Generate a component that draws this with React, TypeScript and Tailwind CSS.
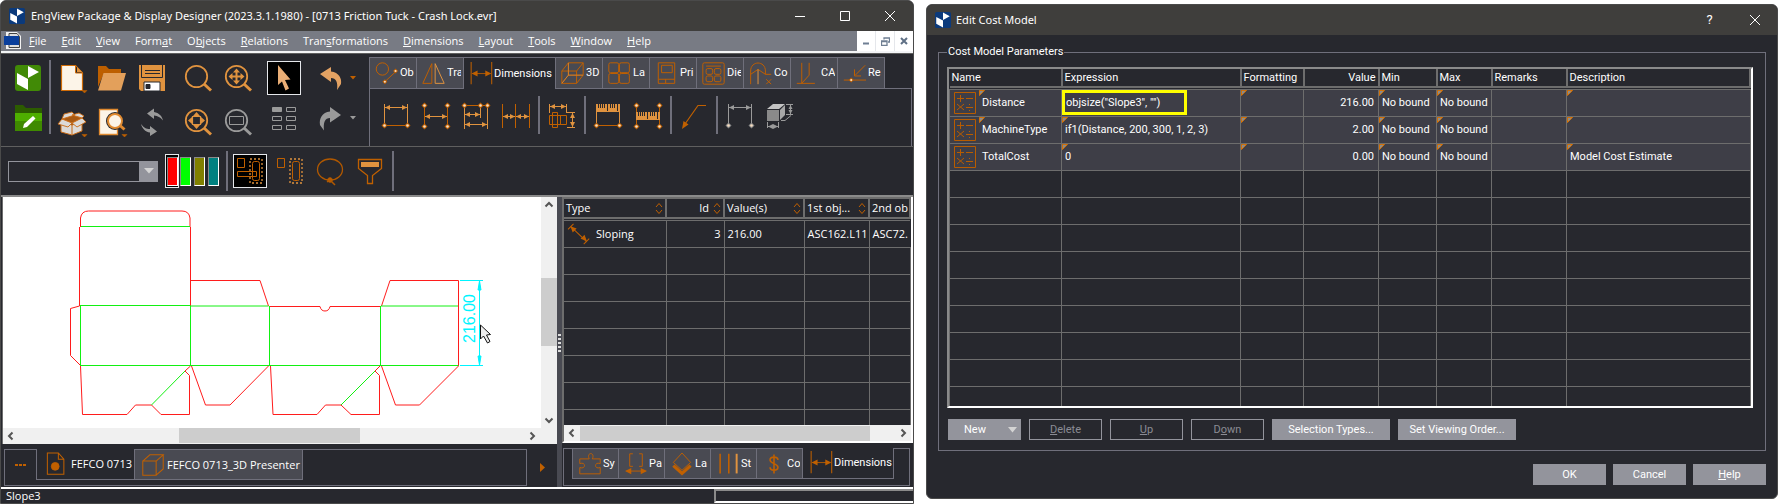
import type { ReactNode } from 'react';

const DARK = '#c06000';
const LIGHT = '#e0933f';
const GREY = '#9a9a9a';

type IconProps = { children: ReactNode; color?: string; size?: number };

const Icon = ({ children, color = DARK, size = 28 }: IconProps) => (
  <svg
    width={size}
    height={size}
    viewBox="0 0 28 28"
    fill="none"
    stroke={color}
    className="block shrink-0 overflow-visible"
    aria-hidden="true"
  >
    {children}
  </svg>
);

const Caret = ({ color = DARK }: { color?: string }) => (
  <path d="M24 26.5h5l-2.5 2.5z" fill={color} stroke={color} strokeWidth="0.5" />
);

const Logo = ({ size, color }: { size: number; color: string }) => (
  <svg width={size} height={size} viewBox="0 0 26 26" className="block shrink-0" aria-hidden="true">
    <rect width="26" height="26" rx="3" fill={color} />
    <path d="M2 8l11 6v11L2 19z" fill="#fff" />
    <path d="M13 1l11 6-11 6z" fill="#fff" />
  </svg>
);

const Node = ({ x, y, color = DARK }: { x: number; y: number; color?: string }) => (
  <>
    <path d={`M${x - 3} ${y}l3-3 3 3-3 3z`} fill={color} stroke="none" />
    <circle cx={x} cy={y} r="1.3" fill="#f6dcc0" stroke="none" />
  </>
);

const HArrow = ({ x1, x2, y, color = LIGHT }: { x1: number; x2: number; y: number; color?: string }) => (
  <>
    <path d={`M${x1} ${y}H${x2}`} stroke={color} />
    <path
      d={`M${x1} ${y}l5-2.5v5zM${x2} ${y}l-5-2.5v5z`}
      fill={color}
      stroke="none"
    />
  </>
);

const Lens = () => (
  <>
    <circle cx="12.5" cy="12.5" r="10.7" strokeWidth="1.8" />
    <path d="M20 20l7 6.5" strokeWidth="3" />
  </>
);

const DimIcon = () => (
  <Icon color={DARK} size={24}>
    <path d="M2.5 0v26M26.5 0v26" strokeWidth="1.2" />
    <path d="M4 13.5h21" />
    <path d="M3 13.5l7-3.5v7zM26 13.5l-7-3.5v7z" fill={DARK} stroke="none" />
  </Icon>
);

const NewIcon = () => (
  <Icon color="#d06c08">
    <path d="M3.5 1.5h14l7 7.5v17.5h-21z" fill="#fcf4e8" strokeWidth="1.2" />
    <path d="M17.5 1.5V9h7z" fill="#27282e" />
    <path d="M19 3v5h5z" fill={LIGHT} stroke="none" />
    <Caret />
  </Icon>
);

const OpenIcon = () => (
  <Icon>
    <path d="M0 2h8l3 3h12v4H6L0 23z" fill="#bd5f00" stroke="none" />
    <path d="M5.5 9H28l-5 17.5H0z" fill="#e3a05b" stroke="none" />
  </Icon>
);

const SaveIcon = () => (
  <Icon color="#27282e">
    <path d="M1 1h26v26H3l-2-2z" fill={LIGHT} stroke="none" />
    <path d="M3.5 1v12.5h21V1M7 6.5h15M7 9.5h15" />
    <path d="M6 18h16v9H6z" fill="#fff" />
    <path d="M8 20.5h4v4H8z" fill="#27282e" />
  </Icon>
);

const ZoomIcon = () => (
  <Icon color={LIGHT}>
    <Lens />
  </Icon>
);

const PanIcon = () => (
  <Icon color={LIGHT}>
    <Lens />
    <path d="M12.5 7v11M7 12.5h11" strokeWidth="2" />
    <path d="M12.5 4.5l3.5 4H9zM12.5 20.5l3.5-4H9zM4.5 12.5l4-3.5v7zM20.5 12.5l-4-3.5v7z" fill={LIGHT} stroke="none" />
  </Icon>
);

const FitIcon = () => (
  <Icon color={LIGHT}>
    <Lens />
    <path d="M8.5 8.5h8v8h-8z" strokeWidth="1.2" />
    <path d="M12.5 4l3.5 4H9zM12.5 21l3.5-4H9zM4 12.5l4-3.5v7zM21 12.5l-4-3.5v7z" fill={LIGHT} stroke="none" />
  </Icon>
);

const WindowZoomIcon = () => (
  <Icon color={GREY}>
    <Lens />
    <path d="M5.5 8.5h14v8h-14z" />
  </Icon>
);

const PointerIcon = () => (
  <Icon>
    <path d="M8 1l12.5 14.5-5.5.5 4 8.5-3.5 2-3.5-9-4 3.5z" fill="#eaae76" stroke="none" />
  </Icon>
);

const UndoIcon = () => (
  <Icon>
    <path d="M4 10l11-7v4.5c8 1 11 7 10 12.5l-4 6c1-8-1-12-6-12V18z" fill="#e3a263" stroke="none" />
    <path d="M34 12h6l-3 3.5z" fill={DARK} stroke="none" />
  </Icon>
);

const RedoIcon = () => (
  <Icon>
    <path d="M25 11L14 3v4.500C6 8.500 3 14.500 4 21l4 5.500c-1-8 1-12.500 6-12.500v4.500z" fill={GREY} stroke="none" />
    <path d="M34 12h6l-3 3.5z" fill={GREY} stroke="none" />
  </Icon>
);

const EditFolderIcon = () => (
  <Icon>
    <path d="M1 1h8l3 3h16v6H1z" fill="#2c5c00" stroke="none" />
    <path d="M1 9h27v18H1z" fill="#4eae00" stroke="none" />
    <path d="M1 17h27v10H1z" fill="#3f8a00" stroke="none" />
    <path d="M9 24l1-4 9-8 2.500 2.500-8.500 8.500z" fill="#fff" stroke="none" />
  </Icon>
);

const BoxIcon = () => (
  <Icon color="#c86a14">
    <path d="M3 14l11 3 10-3v9l-10 4-11-3z" fill="#dcdad8" />
    <path d="M4 11l10-4 10 3-10 5z" fill="#a85a14" />
    <path d="M4 11l-4 5 10 3 4-4zM14 15l5 4 9-5-4-4zM4 11l2-5 8-2 3 3zM14 7l7-2 5 3-2 2z" fill="#dcdad8" strokeWidth="0.9" />
    <path d="M14 16v10" />
    <Caret />
  </Icon>
);

const PreviewIcon = () => (
  <Icon color="#e08a30">
    <path d="M1.5 1.5h18v25h-18z" fill="#fcf4e8" strokeWidth="1.3" />
    <circle cx="17" cy="13" r="9" fill="#27282e" stroke="none" />
    <circle cx="17" cy="13" r="7" fill="#fcf4e8" strokeWidth="2" />
    <path d="M22 17.5l4.500 4" strokeWidth="3" />
    <Caret />
  </Icon>
);

const RefreshIcon = () => (
  <Icon color={GREY}>
    <path d="M9 5.5l7-5V4c5 1 8 4 9 8.500-3-3.500-5-4.500-9-5V11z" fill={GREY} stroke="none" />
    <path d="M19 23.500l-7 4.500v-3.500C7 24 4 20 3 16c3 4 5 5 9 5v-3z" fill={GREY} stroke="none" />
  </Icon>
);

const GridIcon = () => (
  <Icon color={GREY}>
    <path d="M2.500 3.500h9v4h-9z" fill={GREY} />
    <path d="M16.500 3.500h9v4h-9zM2.500 12.500h9v4h-9zM16.500 12.500h9v4h-9zM2.500 21.500h9v4h-9zM16.500 21.500h9v4h-9z" />
  </Icon>
);

const SelectOverlapIcon = () => (
  <Icon>
    <path d="M1.5 1.5h7v9h-7zM1.5 14.5h19v5h-19z" />
    <rect x="16.5" y="4.5" width="7" height="19" rx="2" />
    <path d="M14 2h12v24H14z" stroke={LIGHT} strokeDasharray="2 2" strokeWidth="1.3" />
  </Icon>
);

const SelectInsideIcon = () => (
  <Icon>
    <path d="M1.5 1.5h7v9h-7z" />
    <rect x="16.5" y="4.5" width="7" height="19" rx="2" />
    <path d="M14 2h12v24H14z" stroke={LIGHT} strokeDasharray="2 2" strokeWidth="1.3" />
  </Icon>
);

const LassoIcon = () => (
  <Icon color="#b05800">
    <ellipse cx="14" cy="12.5" rx="12.5" ry="10.5" strokeWidth="1.3" />
    <circle cx="14" cy="23" r="2.3" fill={DARK} />
    <path d="M11 25l3-2 5 5" strokeWidth="1.5" />
  </Icon>
);

const FilterIcon = () => (
  <Icon>
    <path d="M2.5 2.5h23v9l-9 7v8h-5v-8l-9-7z" strokeWidth="1.3" />
    <path d="M5 5h18v5H5z" fill={LIGHT} stroke="none" />
  </Icon>
);

const Ruler = ({ y }: { y: number }) => (
  <>
    <path d={`M2 ${y}h24v8H2z`} fill={LIGHT} stroke="none" />
    <path d={`M4.5 ${y}v4M6.5 ${y}v4M8.5 ${y}v4M10.5 ${y}v4M13.5 ${y}v7M16.5 ${y}v4M18.5 ${y}v4M20.5 ${y}v4M23.5 ${y}v7`} stroke="#27282e" />
  </>
);

const LinearIcon = ({ color = LIGHT, node = DARK }: { color?: string; node?: string }) => (
  <Icon color={color}>
    <path d="M2.5 2v22M25.5 2v22" />
    <HArrow x1={3} x2={25} y={5.5} color={color} />
    {color === LIGHT && <path d="M3 23.5h22" stroke={DARK} />}
    <Node x={2.5} y={23.5} color={node} />
    <Node x={25.5} y={23.5} color={node} />
  </Icon>
);

const BetweenIcon = () => (
  <Icon>
    <path d="M2.5 3v22M25.5 3v22" />
    <HArrow x1={3} x2={25} y={14.5} />
    <Node x={2.5} y={3.5} />
    <Node x={25.5} y={3.5} />
    <Node x={2.5} y={24.5} />
    <Node x={25.5} y={24.5} />
  </Icon>
);

const BaselineIcon = () => (
  <Icon>
    <path d="M2.5 3v24M25.5 3v24M18.5 3v13" stroke={LIGHT} />
    <path d="M2 3.5h24" />
    <HArrow x1={3} x2={18} y={12.5} />
    <HArrow x1={3} x2={25} y={22.5} />
    <Node x={2.5} y={3.5} />
    <Node x={18.5} y={3.5} />
    <Node x={25.5} y={3.5} />
  </Icon>
);

const ChainIcon = () => (
  <Icon>
    <path d="M0.5 2v24M13.5 2v24M27.5 2v24" />
    <HArrow x1={1} x2={13} y={14.5} />
    <HArrow x1={14} x2={27} y={14.5} />
  </Icon>
);

const AutoIcon = () => (
  <Icon>
    <path d="M1.5 13.5h17v9h-17zM4.5 10.5h5v15h-5zM12.5 13.5v9" />
    <path d="M1.5 2v9M18.5 2v9M19 10.5h8M19 25.5h8M24.5 11v14" stroke={LIGHT} />
    <HArrow x1={2} x2={18} y={4.5} />
    <path d="M24.5 11l-2.5 5h5zM24.5 25l-2.5-5h5z" fill={LIGHT} stroke="none" />
  </Icon>
);

const RulerTopIcon = () => (
  <Icon>
    <path d="M2.5 10v14M25.5 10v14" stroke={LIGHT} />
    <path d="M3 23.5h22" />
    <Ruler y={2} />
    <Node x={2.5} y={23.5} />
    <Node x={25.5} y={23.5} />
  </Icon>
);

const RulerMidIcon = () => (
  <Icon>
    <path d="M2.5 3v22M25.5 3v22" />
    <Ruler y={10} />
    <Node x={2.5} y={3.5} />
    <Node x={25.5} y={3.5} />
    <Node x={2.5} y={24.5} />
    <Node x={25.5} y={24.5} />
  </Icon>
);

const LeaderIcon = () => (
  <Icon>
    <path d="M26 3.5h-8L5 22" strokeWidth="1.2" />
    <path d="M2 27l1.5-8 5 3.5z" fill={DARK} stroke="none" />
  </Icon>
);

const SolidIcon = () => (
  <Icon color={GREY}>
    <path d="M1 8h12v11H1z" fill="#8a8a8a" stroke="none" />
    <path d="M1 7l6-5h12l-6 5z" fill="#c4c4c4" stroke="none" />
    <path d="M14 8l5-5v10l-5 5z" fill="#a8a8a8" stroke="none" />
    <path d="M1.5 20v6M12.5 20v6M20 2.5h7M20 12.5h7M24.5 3v9M15 18.5h4l6-5" />
    <HArrow x1={2} x2={12} y={24.5} color={GREY} />
    <path d="M24.5 3l-2 4h4zM24.5 12l-2-4h4z" fill={GREY} stroke="none" />
  </Icon>
);

const ribbonTabs: { label: string; icon?: ReactNode; active?: boolean }[] = [
  {
    label: 'Ob',
    icon: (
      <>
        <circle cx="9" cy="8.5" r="7.5" strokeWidth="1.2" />
        <path d="M12 24l14-13" strokeWidth="1.2" />
        <Node x={12} y={24} />
        <Node x={25} y={11} />
      </>
    ),
  },
  {
    label: 'Tra',
    icon: (
      <>
        <path d="M12 2v24H1z" strokeWidth="1.2" />
        <path d="M16 2v24h11z" stroke={LIGHT} strokeWidth="1.2" />
      </>
    ),
  },
  { label: 'Dimensions', active: true },
  {
    label: '3D',
    icon: (
      <>
        <path d="M1 11h18v15H1zM9 1h18v15H9zM1 11l8-10M19 11l8-10M19 26l8-10M1 26l8-10" strokeWidth="1.2" />
        <path d="M9 1v15h18M1 26l8-10" stroke={LIGHT} strokeWidth="0.8" />
      </>
    ),
  },
  {
    label: 'La',
    icon: (
      <>
        <rect x="1" y="1" width="12" height="12" rx="2" strokeWidth="1.2" />
        <rect x="14" y="1" width="12" height="12" rx="2" strokeWidth="1.2" />
        <rect x="1" y="14" width="12" height="12" rx="2" strokeWidth="1.2" />
        <rect x="14" y="14" width="12" height="12" rx="2" strokeWidth="1.2" />
      </>
    ),
  },
  { label: 'Pri', icon: <path d="M4 1h20v25H4zM8 4h13v9H8zM4 21h20M13 21v5" strokeWidth="1.2" /> },
  {
    label: 'Die',
    icon: (
      <>
        <rect x="1" y="1" width="26" height="26" rx="2" strokeWidth="1.2" />
        <path d="M5 5h18" strokeWidth="1.2" />
        <rect x="5" y="8" width="8" height="7" rx="2" strokeWidth="1.2" />
        <rect x="15" y="8" width="8" height="7" rx="2" strokeWidth="1.2" />
        <rect x="5" y="17" width="8" height="7" rx="2" strokeWidth="1.2" />
        <rect x="15" y="17" width="8" height="7" rx="2" strokeWidth="1.2" />
      </>
    ),
  },
  {
    label: 'Co',
    icon: (
      <>
        <path d="M2 27V11C2-2 20-2 20 11v4h7M2 15l9-6 9 6M21 21l6 6M27 21l-6 6" strokeWidth="1.2" />
        <path d="M11 9v18" stroke={LIGHT} strokeWidth="1.2" />
      </>
    ),
  },
  { label: 'CA', icon: <path d="M7 1v25M16 1v15L7 26M1 26h22" strokeWidth="1.2" /> },
  {
    label: 'Re',
    icon: (
      <>
        <path d="M1 22h27M27 4L15 16M14 9v8h8" strokeWidth="1.2" />
        <Node x={10} y={22} />
      </>
    ),
  },
];

const bottomTabs: { label: string; icon: ReactNode }[] = [
  {
    label: 'Sy',
    icon: (
      <path
        d="M1 7.5h12c-4-9 8-9 4 0h10v6c-8-3-8 8 0 5v8H1v-8c8 3 8-8 0-5z"
        strokeWidth="1.2"
      />
    ),
  },
  {
    label: 'Pa',
    icon: (
      <>
        <path d="M10 1H6v16h4M18 1h4v16h-4M2 23h24" strokeWidth="1.2" />
        <path d="M0 23l8-4v8zM28 23l-8-4v8z" fill={DARK} stroke="none" />
      </>
    ),
  },
  {
    label: 'La',
    icon: (
      <>
        <path d="M14 0l11 12-11 10L3 12z" strokeWidth="1.2" />
        <path d="M3 16l11 10 11-10" strokeWidth="4" />
      </>
    ),
  },
  {
    label: 'St',
    icon: (
      <>
        <path d="M4 1v25M15 1v25" strokeWidth="2" />
        <path d="M25 1v25" stroke={LIGHT} strokeWidth="2.5" />
      </>
    ),
  },
  {
    label: 'Co',
    icon: <path d="M14 2v24M19 9c0-5-10-5-10 0s10 4 10 9-10 5-10 0" strokeWidth="2" />,
  },
];

const menus: [string, string, string][] = [
  ['', 'F', 'ile'],
  ['', 'E', 'dit'],
  ['', 'V', 'iew'],
  ['Form', 'a', 't'],
  ['O', 'b', 'jects'],
  ['', 'R', 'elations'],
  ['Tran', 's', 'formations'],
  ['', 'D', 'imensions'],
  ['', 'L', 'ayout'],
  ['', 'T', 'ools'],
  ['', 'W', 'indow'],
  ['', 'H', 'elp'],
];

const Tool = ({ label, children, active }: { label: string; children: ReactNode; active?: boolean }) => (
  <button type="button" aria-label={label} className="flex h-10 w-10 shrink-0 items-center justify-center">
    {active ? (
      <span className="flex h-[34px] w-[34px] items-center justify-center border border-gray-200 bg-black">
        {children}
      </span>
    ) : (
      children
    )}
  </button>
);

const Divider = () => (
  <div className="flex w-[6px] shrink-0 justify-center">
    <div className="w-[2px] bg-[#6f6f7b]" />
  </div>
);

const Chevron = ({ dir }: { dir: 'up' | 'down' | 'left' | 'right' }) => {
  const d = {
    up: 'M4.5 9.5L8 6l3.5 3.5',
    down: 'M4.5 6.5L8 10l3.5-3.5',
    left: 'M9.5 4.5L6 8l3.5 3.5',
    right: 'M6.5 4.5L10 8l-3.5 3.5',
  }[dir];
  return (
    <svg width="16" height="16" viewBox="0 0 16 16" fill="none" className="block shrink-0" aria-hidden="true">
      <path d={d} stroke="#555" strokeWidth="2" />
    </svg>
  );
};

const WindowTitle = () => (
  <div className="flex h-[30px] items-center bg-[#3f3e3c] pl-2">
    <Logo size={16} color="#0b3a7c" />
    <h1 className="ml-[6px] flex-1 truncate font-['Noto_Sans',sans-serif] text-[11px] text-white">
      EngView Package &amp; Display Designer (2023.3.1.1980) - [0713 Friction Tuck - Crash Lock.evr]
    </h1>
    <div className="flex">
      <button type="button" aria-label="Minimize" className="flex w-[45px] justify-center">
        <svg width="10" height="10" stroke="#fff"><path d="M0 5.5h10" /></svg>
      </button>
      <button type="button" aria-label="Maximize" className="flex w-[45px] justify-center">
        <svg width="10" height="10" stroke="#fff" fill="none"><path d="M0.5 0.5h9v9h-9z" /></svg>
      </button>
      <button type="button" aria-label="Close" className="flex w-[46px] justify-center">
        <svg width="10" height="10" stroke="#fff"><path d="M0 0l10 10M10 0L0 10" /></svg>
      </button>
    </div>
  </div>
);

const MenuBar = () => (
  <div className="flex h-[22px] items-stretch border-b-2 border-gray-100 bg-[#787b84]">
    <svg width="18" height="18" viewBox="0 0 18 18" className="ml-[3px] mt-[1px] shrink-0" aria-hidden="true">
      <path d="M2 0h11l4 4v13H2z" fill="#f2f2f2" />
      <path d="M5 1.5h8l2.500 3v11H5z" fill="#ddd" stroke="#444" />
      <path d="M0 4h15v9H0z" fill="#0a3f9c" />
    </svg>
    <nav className="ml-[7px] flex flex-1 items-center gap-[15px] whitespace-nowrap font-['Open_Sans',sans-serif] text-[11px] leading-5 text-white">
      {menus.map(([before, key, after]) => (
        <button type="button" key={before + key + after}>
          {before}
          <u>{key}</u>
          {after}
        </button>
      ))}
    </nav>
    <div className="flex gap-[1px] bg-gray-200">
      <button type="button" aria-label="Minimize document" className="flex w-[18px] items-center justify-center bg-white">
        <svg width="8" height="8"><path d="M1 6.5h6" stroke="#6f7f93" strokeWidth="2" /></svg>
      </button>
      <button type="button" aria-label="Restore document" className="flex w-[18px] items-center justify-center bg-white">
        <svg width="9" height="9" fill="none" stroke="#6f7f93"><path d="M3 2.5V1h5.5v4H7M0.5 4h5.5v4.500H0.5zM0 4.500h6" strokeWidth="1.3" /></svg>
      </button>
      <button type="button" aria-label="Close document" className="flex w-[18px] items-center justify-center bg-white">
        <svg width="8" height="8"><path d="M1 1l6 6M7 1L1 7" stroke="#5f7085" strokeWidth="2" /></svg>
      </button>
    </div>
  </div>
);

const MainTools = () => (
  <div className="flex w-[366px] shrink-0 gap-[1px] pl-[5px] pt-1">
    <div>
      <Tool label="Home"><Logo size={26} color="#418a06" /></Tool>
      <Tool label="Edit folder"><EditFolderIcon /></Tool>
    </div>
    <div className="mt-[2px] h-[74px] w-[2px] bg-[#6f6f7b]" />
    <div className="flex gap-[6px]">
      <div className="grid grid-cols-3">
        <Tool label="New"><NewIcon /></Tool>
        <Tool label="Open"><OpenIcon /></Tool>
        <Tool label="Save"><SaveIcon /></Tool>
        <Tool label="Library"><BoxIcon /></Tool>
        <Tool label="Preview"><PreviewIcon /></Tool>
        <Tool label="Refresh"><RefreshIcon /></Tool>
      </div>
      <div className="grid grid-cols-2">
        <Tool label="Zoom"><ZoomIcon /></Tool>
        <Tool label="Pan"><PanIcon /></Tool>
        <Tool label="Zoom to fit"><FitIcon /></Tool>
        <Tool label="Zoom window"><WindowZoomIcon /></Tool>
      </div>
      <div>
        <Tool label="Select" active><PointerIcon /></Tool>
        <Tool label="Tile"><GridIcon /></Tool>
      </div>
      <div>
        <Tool label="Undo"><UndoIcon /></Tool>
        <Tool label="Redo"><RedoIcon /></Tool>
      </div>
    </div>
  </div>
);

const Ribbon = () => (
  <div className="mt-[3px] min-w-0 flex-1 pr-[1px]">
    <div className="flex h-8">
      {ribbonTabs.map((tab) =>
        tab.active ? (
          <button
            type="button"
            key={tab.label}
            className="flex w-[92px] shrink-0 items-center gap-[1px] border-l border-t border-[#6f6f7b] pl-[5px] text-white"
          >
            <DimIcon />
            {tab.label}
          </button>
        ) : (
          <button
            type="button"
            key={tab.label}
            className="flex w-[47px] shrink-0 items-center gap-[2px] border border-r-0 border-[#6f6f7b] bg-[#494a52] pl-[5px] text-white"
          >
            <Icon size={23}>{tab.icon}</Icon>
            <span className="w-[14px] overflow-hidden text-left">{tab.label}</span>
          </button>
        )
      )}
      <div className="flex-1 border-b border-l border-[#6f6f7b]" />
    </div>
    <div className="flex h-[57px] border-x border-[#6f6f7b] pl-[6px] pt-[7px]">
      <Tool label="Linear dimension"><LinearIcon /></Tool>
      <Tool label="Point dimension"><BetweenIcon /></Tool>
      <Tool label="Baseline dimension"><BaselineIcon /></Tool>
      <Tool label="Chain dimension"><ChainIcon /></Tool>
      <div className="flex h-[38px]"><Divider /></div>
      <Tool label="Auto dimension"><AutoIcon /></Tool>
      <div className="flex h-[38px]"><Divider /></div>
      <Tool label="Ruler"><RulerTopIcon /></Tool>
      <Tool label="Ruler between points"><RulerMidIcon /></Tool>
      <div className="flex h-[38px]"><Divider /></div>
      <Tool label="Leader"><LeaderIcon /></Tool>
      <div className="flex h-[38px]"><Divider /></div>
      <Tool label="Drawing size"><LinearIcon color={GREY} node="#8a8a8a" /></Tool>
      <Tool label="Solid size"><SolidIcon /></Tool>
    </div>
  </div>
);

const Swatch = ({ label, className }: { label: string; className: string }) => (
  <button
    type="button"
    aria-label={label}
    className={`h-[29px] w-[11px] border border-[#8a8a8a] border-b-white border-r-white ${className}`}
  />
);

const StyleBar = () => (
  <div className="flex h-[49px] items-center border-t border-[#5f5f5f] pl-[7px]">
    <div className="relative w-[150px]">
      <select
        aria-label="Style"
        className="block h-[21px] w-full appearance-none border border-[#93949c] bg-transparent text-white"
      />
      <span className="pointer-events-none absolute right-0 top-0 flex h-[21px] w-[19px] items-center justify-center bg-[#93949c]">
        <svg width="10" height="6"><path d="M0 0h10L5 5.5z" fill="#d4d4d4" /></svg>
      </span>
    </div>
    <div className="ml-[7px] flex items-center gap-[1px]">
      <span className="flex h-[34px] w-[14px] items-center justify-center border border-gray-200 bg-black">
        <Swatch label="Cut" className="bg-[#ff0000]" />
      </span>
      <div className="flex gap-[3px]">
        <Swatch label="Crease" className="bg-[#00ff00]" />
        <Swatch label="Perforation" className="bg-[#808000]" />
        <Swatch label="Half cut" className="bg-[#008080]" />
      </div>
    </div>
    <div className="ml-[5px] flex h-10"><Divider /></div>
    <Tool label="Select touching" active><SelectOverlapIcon /></Tool>
    <Tool label="Select inside"><SelectInsideIcon /></Tool>
    <Tool label="Lasso"><LassoIcon /></Tool>
    <Tool label="Filter"><FilterIcon /></Tool>
    <div className="flex h-10"><Divider /></div>
  </div>
);

const Drawing = () => (
  <svg width="538" height="231" viewBox="3 197 538 231" fill="none" className="block shrink-0" aria-label="Box layout">
    <g stroke="#ff1c1c">
      <path d="M80.5 227v-9q1-7 8-7H182q7 0 8 7v9M79.5 227v79M190.5 227v79" />
      <path d="M79.5 306l-9 2.5v47l10 10" />
      <path d="M190.5 280.5H260l8.5 25.5M269.5 306.5H320q1 4.500 5 4.500t5-4.500h51M381.5 306l8.500-25.500h68.500V306M458.500 306v60" />
      <path d="M80.5 366l2 48.500H127l8.500-9.500h16l9.500 9.500h28.500v-39l-4.500-4.500 5.500-5" />
      <path d="M191.5 366l14 39H230l38.500-39" />
      <path d="M270.5 366l2.500 48.500h44l8.500-9.500H341l10 9.500h28.500v-39L375 371l5-5" />
      <path d="M381.5 366l14 39h24l39-39" />
    </g>
    <g stroke="#12f012">
      <path d="M81 226.5h109M80 305.5h110.500M190.5 306h78M381 306h77M80 365.5h378.500" />
      <path d="M80.5 306v60M190.5 306v60M269.5 306v60M380.5 306v60" />
      <path d="M151.5 405l33.500-34M341 405l34-34" />
    </g>
    <g stroke="#00f4ff">
      <path d="M460 280.5h23M460 365.5h23M479.5 281v84" />
      <path d="M479.5 281l1.5 9h-3zM479.5 365l1.500-9h-3z" fill="#00f4ff" />
    </g>
    <text
      transform="translate(475 343) rotate(-90)"
      fill="#00f4ff"
      fontSize="16"
      fontFamily="'Liberation Sans', sans-serif"
    >
      216.00
    </text>
    <path d="M480.5 325v14l3-3 4 7 2.500-1.500-3.500-6.500 4-.5z" fill="#eee" stroke="#111" />
  </svg>
);

const DrawingPane = () => (
  <div className="flex min-w-0 flex-1 flex-col">
    <div className="flex border-l border-[#6d6d6d]">
      <div className="min-w-0 flex-1 overflow-hidden bg-white">
        <Drawing />
      </div>
      <div className="flex w-4 flex-col bg-[#f0f0f0]">
        <Chevron dir="up" />
        <div className="mt-[65px] h-[68px] bg-[#cdcdcd]" />
        <div className="flex-1" />
        <Chevron dir="down" />
      </div>
    </div>
    <div className="flex h-4 border-l border-[#6d6d6d] bg-[#f0f0f0] pr-[17px]">
      <Chevron dir="left" />
      <div className="ml-[160px] h-[15px] w-[181px] bg-[#cdcdcd]" />
      <div className="flex-1" />
      <Chevron dir="right" />
    </div>
    <div className="flex h-[43px] pb-[1px] pl-[2px] pt-[5px] text-white">
      <div className="flex min-w-0 flex-1 border-b border-l border-r border-[#6f6f7b]">
        <button
          type="button"
          aria-label="More sheets"
          className="flex h-[31px] w-[31px] shrink-0 items-center justify-center border-t border-[#6f6f7b]"
        >
          <svg width="12" height="4"><path d="M0 1h3v2H0zM4 1h3v2H4zM8 1h3v2H8z" fill={DARK} /></svg>
        </button>
        <button
          type="button"
          className="flex h-[31px] w-[98px] shrink-0 items-center gap-1 whitespace-nowrap border-b border-l border-[#6f6f7b] pl-2 font-['Open_Sans',sans-serif]"
        >
          <Icon size={22}>
            <path d="M3 0h14l7 8v19H3zM17 0v8h7" strokeWidth="1.3" />
            <circle cx="13" cy="17" r="5" fill={DARK} />
          </Icon>
          FEFCO 0713
        </button>
        <button
          type="button"
          className="flex h-[31px] w-[169px] shrink-0 items-center gap-[3px] whitespace-nowrap border border-[#6f6f7b] bg-[#494a52] pl-[7px] font-['Open_Sans',sans-serif]"
        >
          <Icon size={22}>
            <path d="M1 9h17v18H1zM1 9l9-8h17l-9 8M27 1v18l-9 8" strokeWidth="1.3" />
          </Icon>
          FEFCO 0713_3D Presenter
        </button>
        <div className="flex-1 border-t border-[#6f6f7b]" />
      </div>
      <button type="button" aria-label="Next sheet" className="flex w-[30px] items-center justify-center">
        <svg width="5" height="9"><path d="M0 0v9l5-4.500z" fill={DARK} /></svg>
      </button>
    </div>
  </div>
);

const SortMark = () => (
  <svg width="8" height="11" fill="none" stroke={DARK} className="shrink-0" aria-hidden="true">
    <path d="M1 4l3-3.500L7 4M1 7l3 3.500L7 7" />
  </svg>
);

const dimColumns = ['Type', 'Id', 'Value(s)', '1st obj...', '2nd ob'];

const DimensionPane = () => (
  <div className="flex w-[351px] shrink-0 flex-col">
    <div className="h-[246px] border-b-2 border-l-2 border-r-2 border-b-white border-l-[#6d6d6d] border-r-white">
      <div className="h-[228px] overflow-hidden">
        <table className="w-full table-fixed border-collapse font-['Open_Sans',sans-serif] text-[11px] leading-4 text-white">
          <colgroup>
            <col className="w-[102px]" />
            <col className="w-[58px]" />
            <col className="w-[80px]" />
            <col className="w-[65px]" />
            <col />
          </colgroup>
          <thead>
            <tr className="h-5">
              {dimColumns.map((name) => (
                <th key={name} className="border-2 border-l-0 border-[#6d6d6d] p-0 font-normal">
                  <div className="flex items-center px-[2px]">
                    <span className={name === 'Id' ? 'flex-1 pr-1 text-right' : 'flex-1 whitespace-nowrap text-left'}>{name}</span>
                    {name !== '2nd ob' && <SortMark />}
                  </div>
                </th>
              ))}
            </tr>
            <tr className="h-[2px]">
              <td colSpan={5} className="h-[2px] border-b border-[#6d6d6d] p-0" />
            </tr>
          </thead>
          <tbody>
            <tr className="h-[27px]">
              <td className="border border-l-0 border-[#6d6d6d] p-0">
                <div className="flex items-center gap-[6px] pl-1">
                  <Icon size={22}>
                    <path d="M7 1L0 8M27 20l-7 7M4 5l20 19" strokeWidth="1.3" />
                    <path d="M3 4l8 3-5 5zM24 23l-8-3 5-5z" fill={DARK} stroke="none" />
                  </Icon>
                  Sloping
                </div>
              </td>
              <td className="border border-[#6d6d6d] p-0 pr-[3px] text-right">3</td>
              <td className="border border-[#6d6d6d] p-0 pl-[3px]">216.00</td>
              <td className="overflow-hidden whitespace-nowrap border border-[#6d6d6d] p-0 pl-[3px]">ASC162.L11</td>
              <td className="overflow-hidden whitespace-nowrap border border-r-0 border-[#6d6d6d] p-0 pl-[3px]">ASC72.</td>
            </tr>
            {Array.from({ length: 7 }, (_, i) => (
              <tr key={i} className="h-[27px]">
                {dimColumns.map((name) => (
                  <td key={name} className="border border-l-0 border-[#6d6d6d] p-0" />
                ))}
              </tr>
            ))}
          </tbody>
        </table>
      </div>
      <div className="flex h-4 bg-[#f0f0f0]">
        <Chevron dir="left" />
        <div className="mt-[1px] h-[15px] w-[290px] bg-[#cdcdcd]" />
        <div className="flex-1" />
        <Chevron dir="right" />
      </div>
    </div>
    <div className="flex h-[44px] pb-[1px] pl-[1px] pr-[3px] pt-[5px] text-white">
      <div className="flex min-w-0 flex-1 border-b border-l border-r border-[#6f6f7b]">
        <div className="w-[8px] border-t border-[#6f6f7b]" />
        {bottomTabs.map((tab) => (
          <button
            type="button"
            key={tab.label}
            className="flex h-[31px] w-[46px] shrink-0 items-center gap-[2px] border border-r-0 border-[#6f6f7b] bg-[#494a52] pl-[6px]"
          >
            <Icon size={22}>{tab.icon}</Icon>
            <span className="w-[13px] overflow-hidden text-left">{tab.label}</span>
          </button>
        ))}
        <button
          type="button"
          className="flex h-[31px] w-[92px] shrink-0 items-center gap-[1px] border-b border-l border-r border-[#6f6f7b] pl-[6px]"
        >
          <DimIcon />
          Dimensions
        </button>
        <div className="flex-1 border-t border-[#6f6f7b]" />
      </div>
    </div>
  </div>
);

const DesignerWindow = () => (
  <section className="min-w-0 overflow-hidden rounded-t-md border border-[#4a4a4a] bg-[#27282e] font-['Roboto',sans-serif] text-[11px] leading-4">
    <WindowTitle />
    <MenuBar />
    <div className="flex border-t border-[#5f5f5f] pl-[2px]">
      <MainTools />
      <Ribbon />
    </div>
    <StyleBar />
    <div className="flex border-t-2 border-[#8a8a8a] pl-[1px]">
      <DrawingPane />
      <div className="flex w-[5px] shrink-0 flex-col items-center bg-[#494a52] pt-[137px]">
        <svg width="3" height="20"><path d="M1.500 0v20" stroke="#ddd" strokeWidth="3" strokeDasharray="2 2" /></svg>
      </div>
      <DimensionPane />
    </div>
    <footer className="flex h-4 border-t-2 border-white text-white">
      <div className="flex-1 pl-[5px] font-['Open_Sans',sans-serif] leading-[14px]">Slope3</div>
      <div className="w-[199px] border-2 border-r-0 border-[#8a8a8a] border-b-white" />
    </footer>
  </section>
);

const parameters = [
  { name: 'Distance', expression: 'objsize("Slope3", "")', value: '216.00', description: '', marked: true },
  { name: 'MachineType', expression: 'if1(Distance, 200, 300, 1, 2, 3)', value: '2.00', description: '', marked: false },
  { name: 'TotalCost', expression: '0', value: '0.00', description: 'Model Cost Estimate', marked: false },
];

const costColumns = ['Name', 'Expression', 'Formatting', 'Value', 'Min', 'Max', 'Remarks', 'Description'];

const cell = 'border border-[#6d6d6d] p-0 align-top';

// small corner mark for cells that can be edited
const EditMark = () => (
  <svg width="6" height="6" className="block" aria-hidden="true">
    <path d="M0.5 0.5h5l-5 5z" fill="#8a8a8a" stroke="#d07008" />
  </svg>
);

const EditCell = ({ children }: { children?: ReactNode }) => (
  <td className={cell}>
    <div className="flex h-[26px]">
      <EditMark />
      <span className="-ml-[3px] self-center whitespace-nowrap">{children}</span>
    </div>
  </td>
);

const CostTable = () => (
  <div className="h-[341px] overflow-hidden border-2 border-b-white border-l-[#8a8a8a] border-r-white border-t-[#8a8a8a]">
    <table className="w-full table-fixed border-collapse text-white">
      <colgroup>
        <col className="w-[112px]" />
        <col className="w-[179px]" />
        <col className="w-[63px]" />
        <col className="w-[75px]" />
        <col className="w-[58px]" />
        <col className="w-[55px]" />
        <col className="w-[75px]" />
        <col />
      </colgroup>
      <thead>
        <tr className="h-[18px]">
          {costColumns.map((name) => (
            <th
              key={name}
              className={`border-b-2 border-r-2 border-[#6d6d6d] p-0 px-[2px] font-normal ${name === 'Value' ? 'text-right' : 'text-left'}`}
            >
              {name}
            </th>
          ))}
        </tr>
        <tr className="h-[2px]">
          <td colSpan={8} className="h-[2px] p-0" />
        </tr>
      </thead>
      <tbody>
        {parameters.map((p) => (
          <tr key={p.name} className="h-[27px] bg-[#3e3e47]">
            <td className={cell}>
              <div className="flex h-[26px] pl-1">
                <svg width="22" height="22" fill="none" stroke="#b85c00" className="mt-[2px] shrink-0" aria-hidden="true">
                  <path d="M0.500 0.500h21v21h-21zM3 6.500h7M6.500 3v7M12 6.500h7M3 12l7 6M10 12l-7 6M12 15.500h7M15 12.500h1M15 18.500h1" />
                </svg>
                <span className="ml-[3px] w-[6px]">{p.name !== 'TotalCost' && <EditMark />}</span>
                <span className="-ml-[3px] self-center">{p.name}</span>
              </div>
            </td>
            {p.marked ? (
              <td className="border border-[#6d6d6d] p-0">
                <div className="h-[25px] w-[125px] border-[3px] border-[#ffff00] pl-[1px] leading-[20px]">{p.expression}</div>
              </td>
            ) : (
              <EditCell>{p.expression}</EditCell>
            )}
            <EditCell />
            <td className={`${cell} pr-1 text-right leading-[26px]`}>{p.value}</td>
            <EditCell>No bound</EditCell>
            <EditCell>No bound</EditCell>
            <td className={cell} />
            <EditCell>{p.description}</EditCell>
          </tr>
        ))}
        {Array.from({ length: 9 }, (_, i) => (
          <tr key={i} className="h-[27px]">
            {costColumns.map((name) => (
              <td key={name} className={cell} />
            ))}
          </tr>
        ))}
      </tbody>
    </table>
  </div>
);

const solidButton = 'flex h-[21px] items-center justify-center bg-[#93949c] text-white';
const ghostButton = 'flex h-[21px] w-[73px] items-center justify-center border border-[#93949c] text-[#8b8c94]';

const CostDialog = () => (
  <section className="mt-1 min-w-0 overflow-hidden rounded-md border border-[#4a4a4a] bg-[#27282e] font-['Roboto',sans-serif] text-[11px] leading-4 text-white">
    <div className="flex h-[30px] items-center bg-[#3f3e3c] pl-2">
      <Logo size={16} color="#0b3a7c" />
      <h2 className="ml-[5px] flex-1 font-['Noto_Sans',sans-serif]">Edit Cost Model</h2>
      <button type="button" className="w-[45px] text-center text-[13px]">?</button>
      <button type="button" aria-label="Close dialog" className="flex w-[45px] justify-center">
        <svg width="10" height="10" stroke="#fff"><path d="M0 0l10 10M10 0L0 10" /></svg>
      </button>
    </div>
    <div className="px-[11px] pb-[13px] pt-[9px]">
      <fieldset className="border border-[#6f6f7b] pb-[10px] pl-2 pr-3">
        <legend className="px-[1px]">Cost Model Parameters</legend>
        <div className="pt-[7px]">
          <CostTable />
        </div>
        <div className="mt-[11px] flex gap-2 pl-[1px]">
          <button type="button" className={`${solidButton} w-[73px] gap-[22px] pl-3`}>
            New
            <svg width="9" height="6"><path d="M0 0h9L4.500 5.500z" fill="#d4d4d4" /></svg>
          </button>
          <button type="button" disabled className={ghostButton}><u>D</u>elete</button>
          <button type="button" disabled className={ghostButton}><u>U</u>p</button>
          <button type="button" disabled className={ghostButton}>D<u>o</u>wn</button>
          <button type="button" className={`${solidButton} w-[118px]`}>Selection Types...</button>
          <button type="button" className={`${solidButton} w-[118px]`}>Set Viewing Order...</button>
        </div>
      </fieldset>
      <div className="mt-[13px] flex justify-end gap-[7px]">
        <button type="button" className={`${solidButton} w-[73px]`}>OK</button>
        <button type="button" className={`${solidButton} w-[73px]`}>Cancel</button>
        <button type="button" className={`${solidButton} w-[73px]`}><u>H</u>elp</button>
      </div>
    </div>
  </section>
);

const App = () => (
  <main className="grid grid-cols-[914fr_852fr] items-start gap-3 bg-white pr-[1px]">
    <DesignerWindow />
    <CostDialog />
  </main>
);

export default App;
